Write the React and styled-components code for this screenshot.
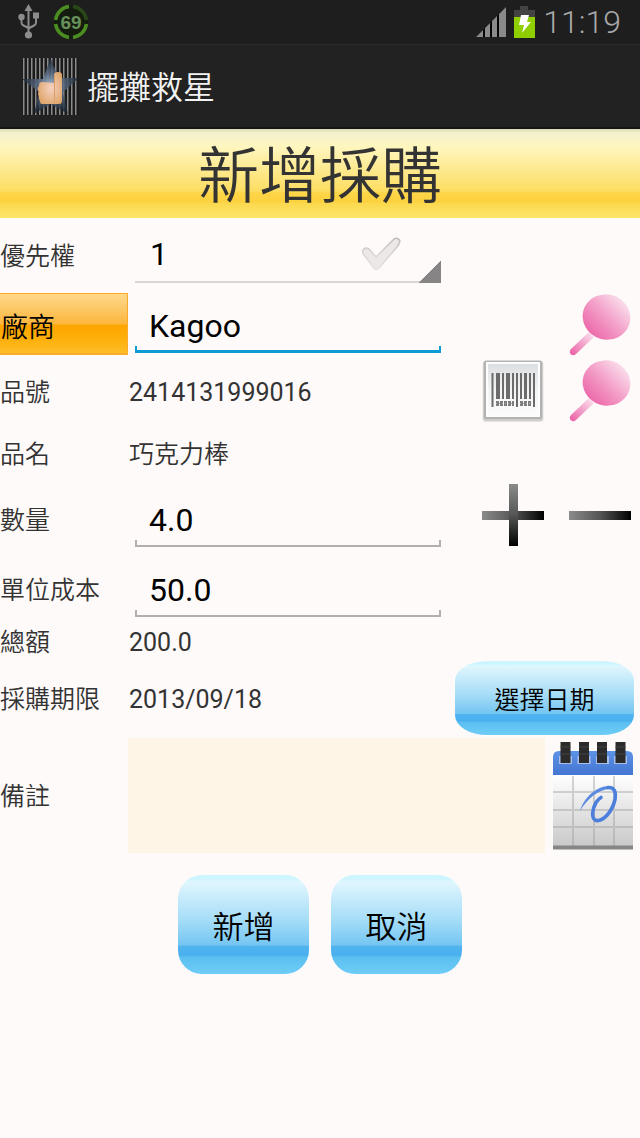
import React, { useState } from 'react'
import styled, { createGlobalStyle } from 'styled-components'

const App = () => {
  const [vendor, setVendor] = useState('Kagoo')
  const [quantity, setQuantity] = useState('4.0')
  const [cost, setCost] = useState('50.0')
  const [note, setNote] = useState('')

  const changeQuantity = (step) => {
    const next = Math.max(0, (parseFloat(quantity) || 0) + step)
    setQuantity(next.toFixed(1))
  }

  const total = (parseFloat(quantity) || 0) * (parseFloat(cost) || 0)

  return (
    <>
      <GlobalStyle />
      <StatusBar>
        <StatusGroup>
          <UsbIcon />
          <BatteryRing />
        </StatusGroup>
        <StatusGroup>
          <SignalIcon />
          <BatteryIcon />
          <Clock>11:19</Clock>
        </StatusGroup>
      </StatusBar>
      <AppBar>
        <AppLogo />
        <AppName>擺攤救星</AppName>
      </AppBar>
      <main>
        <PageTitle>新增採購</PageTitle>
        <form onSubmit={(e) => e.preventDefault()}>
          <Row $height={75}>
            <Label htmlFor="priority">優先權</Label>
            <Spinner>
              <Select id="priority" defaultValue="1">
                <option>1</option>
                <option>2</option>
                <option>3</option>
              </Select>
              <SpinnerMark>
                <CheckIcon />
              </SpinnerMark>
            </Spinner>
          </Row>
          <Row $height={66}>
            <VendorButton type="button">廠商</VendorButton>
            <Field
              $focused
              aria-label="廠商"
              value={vendor}
              onChange={(e) => setVendor(e.target.value)}
            />
            <Actions>
              <IconButton type="button" aria-label="搜尋廠商">
                <SearchIcon id="vendor" />
              </IconButton>
            </Actions>
          </Row>
          <Row $height={66}>
            <Caption>品號</Caption>
            <Value>2414131999016</Value>
            <Actions>
              <IconButton type="button" aria-label="掃描條碼">
                <BarcodeIcon />
              </IconButton>
              <IconButton type="button" aria-label="搜尋品號">
                <SearchIcon id="item" />
              </IconButton>
            </Actions>
          </Row>
          <Row $height={58}>
            <Caption>品名</Caption>
            <Value $light>巧克力棒</Value>
          </Row>
          <Row $height={73}>
            <Label htmlFor="quantity">數量</Label>
            <Field
              id="quantity"
              inputMode="decimal"
              value={quantity}
              onChange={(e) => setQuantity(e.target.value)}
            />
            <Actions>
              <IconButton
                type="button"
                aria-label="增加"
                onClick={() => changeQuantity(1)}
              >
                <PlusIcon />
              </IconButton>
              <IconButton
                type="button"
                aria-label="減少"
                onClick={() => changeQuantity(-1)}
              >
                <MinusIcon />
              </IconButton>
            </Actions>
          </Row>
          <Row $height={68}>
            <Label htmlFor="cost">單位成本</Label>
            <Field
              id="cost"
              inputMode="decimal"
              value={cost}
              onChange={(e) => setCost(e.target.value)}
            />
          </Row>
          <Row $height={36}>
            <Caption>總額</Caption>
            <Value>{total.toFixed(1)}</Value>
          </Row>
          <Row $height={78}>
            <Caption>採購期限</Caption>
            <Value>2013/09/18</Value>
            <DateButton type="button">選擇日期</DateButton>
          </Row>
          <NoteRow>
            <Label htmlFor="note">備註</Label>
            <Note
              id="note"
              value={note}
              onChange={(e) => setNote(e.target.value)}
            />
            <CalendarButton type="button" aria-label="行事曆">
              <CalendarIcon />
            </CalendarButton>
          </NoteRow>
          <Footer>
            <FooterButton type="submit">新增</FooterButton>
            <FooterButton type="button">取消</FooterButton>
          </Footer>
        </form>
      </main>
    </>
  )
}

export default App

const UsbIcon = () => (
  <svg width="22" height="36" viewBox="0 0 22 36" fill="#8c8c8c">
    <path d="M10.500 0l4 7h-8z" />
    <path
      d="M10.500 5v24M3.500 13v5.500q0 2 2 3l5 2.500M18 12v6.500q0 2-2 3l-5.500 3"
      fill="none"
      stroke="#8c8c8c"
      strokeWidth="2"
    />
    <circle cx="3.500" cy="13" r="3.200" />
    <path d="M15 8.500h6v6h-6z" />
    <circle cx="10.500" cy="31" r="3.600" />
  </svg>
)

const BatteryRing = () => (
  <svg width="36" height="36" viewBox="0 0 36 36">
    <circle cx="18" cy="18" r="17" fill="#141c10" />
    <g fill="none" strokeWidth="3.500">
      <path d="M20 2.600A15.500 15.500 0 0 1 33.400 16" stroke="#2a4718" />
      <path
        d="M33.400 20A15.500 15.500 0 0 1 20 33.400M16 33.400A15.500 15.500 0 0 1 2.600 20M2.600 16A15.500 15.500 0 0 1 16 2.600"
        stroke="#4c8d22"
      />
    </g>
    <text
      x="18"
      y="25"
      textAnchor="middle"
      fontFamily="Liberation Sans, sans-serif"
      fontWeight="700"
      fontSize="19"
      fill="#68905a"
    >
      69
    </text>
  </svg>
)

const SignalIcon = () => (
  <svg width="30" height="30" viewBox="0 0 30 30">
    <path d="M0 30L30 0v30z" fill="#050505" />
    <path
      d="M0 30l7-7v7zM9 21l5-5v14H9zM16 14l5-5v21h-5zM23 7l7-7v30h-7z"
      fill="#8a8a8a"
    />
  </svg>
)

const BatteryIcon = () => (
  <svg width="21" height="32" viewBox="0 0 21 32">
    <path d="M6 0h8v4h7v8H0V4h6z" fill="#434343" />
    <path d="M0 11h21v21H0z" fill="#8fce00" />
    <path d="M7 9h8l-2 7h4L8 27l2-8H5z" fill="#fff" />
  </svg>
)

const AppLogo = () => (
  <svg width="57" height="57" viewBox="0 0 57 57">
    <defs>
      <pattern id="bars" width="4" height="57" patternUnits="userSpaceOnUse">
        <path d="M0 0h4v57H0z" fill="#1b1b1b" />
        <path d="M1 0h1.500v57H1z" fill="#8b8b8b" />
      </pattern>
      <radialGradient id="star">
        <stop offset="0" stopColor="#a9bccf" />
        <stop offset="0.450" stopColor="#5b6c82" stopOpacity="0.900" />
        <stop offset="1" stopColor="#1b2534" stopOpacity="0.800" />
      </radialGradient>
      <radialGradient id="hand" cx="0.550" cy="0.500" r="0.600">
        <stop offset="0" stopColor="#f4d2c2" />
        <stop offset="1" stopColor="#dfa468" />
      </radialGradient>
    </defs>
    <path d="M0 0h57v57H0z" fill="url(#bars)" />
    <path
      d="M28.500 0l8 20H57L41 34l5 22-17.500-10L12 56l5-22L0 21h21z"
      fill="url(#star)"
    />
    <path
      d="M32 25V17q0-3 4-3t4 3v26q0 3-3 3H20q-2 0-2-3-1-1-1-3t-1-4q1-2 0-4t1-4q0-4 3-4z"
      fill="url(#hand)"
    />
    <path d="M32.500 17v28" stroke="#dc9d66" />
  </svg>
)

const CheckIcon = () => (
  <svg width="40" height="34" viewBox="0 0 40 34">
    <defs>
      <linearGradient id="check" x2="0" y2="1">
        <stop offset="0" stopColor="#bdbbba" />
        <stop offset="0.500" stopColor="#d8d5d4" />
        <stop offset="1" stopColor="#e4e1e0" />
      </linearGradient>
    </defs>
    <path
      d="M2 13q3-4 7 0l6 7L33 2q4-2 6 2-1 4-3 6L18 31q-3 3-5 0L3 18q-2-3-1-5z"
      fill="#ebe8e7"
      stroke="url(#check)"
      strokeWidth="1.500"
    />
  </svg>
)

const SearchIcon = ({ id }) => (
  <svg width="62" height="62" viewBox="0 0 62 62">
    <defs>
      <linearGradient id={`${id}-lens`} x1="0.250" y1="1" x2="0.800" y2="0">
        <stop offset="0" stopColor="#ec64a8" />
        <stop offset="0.500" stopColor="#f3a0c8" />
        <stop offset="1" stopColor="#fbe6f0" />
      </linearGradient>
      <linearGradient id={`${id}-grip`} x1="0" y1="1" x2="1" y2="0">
        <stop offset="0" stopColor="#ea5ba3" />
        <stop offset="1" stopColor="#fce9f2" />
      </linearGradient>
    </defs>
    <path
      d="M20 38l5 5L7 60q-3 2.500-5.500 0-1.500-3 0.500-5z"
      fill={`url(#${id}-grip)`}
    />
    <ellipse
      cx="37.500"
      cy="23"
      rx="24"
      ry="22.500"
      transform="rotate(18 37.500 23)"
      fill={`url(#${id}-lens)`}
    />
  </svg>
)

const BarcodeIcon = () => (
  <svg width="62" height="62" viewBox="0 0 62 62">
    <defs>
      <linearGradient id="paper" x2="0" y2="1">
        <stop offset="0" stopColor="#dcdfe1" />
        <stop offset="0.500" stopColor="#f3f4f4" />
        <stop offset="1" stopColor="#fbfbfb" />
      </linearGradient>
    </defs>
    <rect x="0.500" y="1" width="61" height="61" rx="3" fill="#e6e3e2" />
    <rect x="1" y="1" width="60" height="60" rx="3" fill="#cfcdcc" />
    <rect x="2" y="0.500" width="58" height="58.500" rx="2" fill="#b1b3b3" />
    <rect x="4" y="2" width="54" height="55" fill="#fdfdfd" />
    <rect x="6" y="4" width="50" height="51" fill="url(#paper)" />
    <path
      d="M9.500 13h2v34h-2zM14 13h4v26h-4zM20 13h2v26h-2zM24 13h4v26h-4zM30 13h2v26h-2zM34 13h2v34h-2zM38 13h2v26h-2zM42 13h3v26h-3zM47 13h2v26h-2zM51 13h2v34h-2z"
      fill="#6c6c6c"
    />
    <path
      d="M14 43.500h18M38 43.500h11"
      fill="none"
      stroke="#7c7c7c"
      strokeWidth="5"
      strokeDasharray="3 1"
    />
    <path d="M14 43.500h18M38 43.500h11" stroke="#aaa" strokeDasharray="1 2" />
  </svg>
)

const PlusIcon = () => (
  <svg width="62" height="62" viewBox="0 0 62 62">
    <defs>
      <linearGradient id="plus-x">
        <stop offset="0" stopColor="#8b8b8b" />
        <stop offset="0.500" stopColor="#555" />
        <stop offset="1" stopColor="#000" />
      </linearGradient>
      <linearGradient id="plus-y" x2="0" y2="1">
        <stop offset="0" stopColor="#8b8b8b" />
        <stop offset="0.500" stopColor="#555" />
        <stop offset="1" stopColor="#000" />
      </linearGradient>
    </defs>
    <path d="M0 27h62v9H0z" fill="url(#plus-x)" />
    <path d="M27 0h9v62h-9z" fill="url(#plus-y)" />
  </svg>
)

const MinusIcon = () => (
  <svg width="62" height="62" viewBox="0 0 62 62">
    <defs>
      <linearGradient id="minus">
        <stop offset="0" stopColor="#8b8b8b" />
        <stop offset="0.500" stopColor="#555" />
        <stop offset="1" stopColor="#000" />
      </linearGradient>
    </defs>
    <path d="M0 27h62v9H0z" fill="url(#minus)" />
  </svg>
)

const CalendarIcon = () => (
  <svg width="80" height="109" viewBox="0 0 80 109">
    <defs>
      <linearGradient id="sheet" x2="0" y2="1">
        <stop offset="0" stopColor="#fff" />
        <stop offset="1" stopColor="#c9c9c9" />
      </linearGradient>
      <linearGradient id="head" x2="0" y2="1">
        <stop offset="0" stopColor="#5d93e6" />
        <stop offset="1" stopColor="#4475d2" />
      </linearGradient>
    </defs>
    <path d="M0 34h80v71H0z" fill="url(#sheet)" />
    <path
      d="M20 35v70M41 35v70M61 35v70M0 51h80M0 69h80M0 86h80"
      stroke="#999"
      strokeOpacity="0.400"
      strokeWidth="2"
    />
    <path d="M0 104.500h80v4H0z" fill="#868686" />
    <path d="M0 34V16q0-6 6-6h68q6 0 6 6v18z" fill="url(#head)" />
    <path
      d="M6 15h13v8H6zM24.500 15h13v8h-13zM43 15h13v8H43zM61 15h13v8H61z"
      fill="#a9bde8"
    />
    <path
      d="M7.500 1h10v21h-10zM26 1h10v21H26zM44 1h10v21H44zM62.500 1h10v21h-10z"
      fill="#2b2b2b"
    />
    <path
      d="M7.500 6h10M26 6h10M44 6h10M62.500 6h10M7.500 13h10M26 13h10M44 13h10M62.500 13h10"
      stroke="#444"
    />
    <path
      d="M27 70C31 56 44 45 56 45L57 48C46 48 34 58 27 70z"
      fill="#5b8be0"
    />
    <path
      d="M55 46.500c7-0.500 8 5 7 12-3 13-12 22-19 21-5-2-4-11 0-18q3-4 5-5"
      fill="none"
      stroke="#4b7fdb"
      strokeWidth="3.600"
      strokeLinecap="round"
    />
  </svg>
)

const GlobalStyle = createGlobalStyle`
  * {
    box-sizing: border-box;
  }

  body {
    margin: 0;
    min-height: 100vh;
    background: #fefaf9;
    color: #333;
    font-family: Roboto, 'Noto Sans CJK TC', sans-serif;
    font-size: 25px;
  }

  button,
  input,
  select,
  textarea {
    margin: 0;
    padding: 0;
    border: 0;
    border-radius: 0;
    outline: 0;
    background: none;
    color: #000;
    font: inherit;
  }

  svg {
    display: block;
    flex: none;
  }
`

const StatusBar = styled.div`
  display: flex;
  justify-content: space-between;
  align-items: center;
  height: 44px;
  padding: 0 19px 0 18px;
  background: #1e1e1e;
`

const StatusGroup = styled.div`
  display: flex;
  align-items: center;
  gap: 8px;

  &:first-child {
    gap: 13px;
  }
`

const Clock = styled.time`
  color: #a8a8a8;
  font-size: 32px;
  font-weight: 300;
  line-height: 44px;
`

const AppBar = styled.header`
  display: flex;
  align-items: center;
  gap: 8px;
  height: 85px;
  padding: 0 22px;
  background: #222;
  border-top: 1px solid #2a2a2a;
  border-bottom: 2px solid #161616;
`

const AppName = styled.span`
  padding-top: 4px;
  color: #f3f3f3;
  font-size: 32px;
  font-weight: 350;
  line-height: 40px;
`

const PageTitle = styled.h1`
  margin: 0;
  height: 89px;
  background: linear-gradient(
    #d9d9ae 0,
    #f3f1cf 4%,
    #fff6be 20%,
    #fde88a 48%,
    #fddd63 69%,
    #fdd548 72%,
    #fdd13e 82%,
    #fbd94f 84%,
    #fde568 100%
  );
  font-size: 61px;
  font-weight: 350;
  line-height: 96px;
  text-align: center;
`

const Row = styled.div`
  display: grid;
  grid-template-columns: 2fr 5fr 3fr;
  align-items: center;
  min-height: ${({ $height }) => $height}px;
`

const Label = styled.label`
  padding-top: 2px;
  font-weight: 350;
  line-height: 32px;
  white-space: nowrap;
`

const Caption = styled.span`
  padding-top: 2px;
  font-weight: 350;
  line-height: 32px;
  white-space: nowrap;
`

const Value = styled.span`
  padding-top: 2px;
  padding-left: 1px;
  font-weight: ${({ $light }) => ($light ? 350 : 400)};
  line-height: 32px;
`

const Spinner = styled.div`
  position: relative;
  height: 55px;
  margin: 0 7px;
`

const Select = styled.select`
  width: 100%;
  height: 100%;
  padding: 0 0 3px 15px;
  appearance: none;
  background:
    linear-gradient(135deg, transparent 50%, #868484 50%) right bottom / 22px
      22px no-repeat,
    linear-gradient(#d8d5d4, #d8d5d4) left bottom / 100% 2px no-repeat;
  font-size: 32px;
`

const SpinnerMark = styled.span`
  position: absolute;
  top: 9px;
  right: 40px;
  pointer-events: none;
`

const Field = styled.input`
  --line: ${({ $focused }) => ($focused ? '#0d9bd1' : '#b0aeae')};
  --thick: ${({ $focused }) => ($focused ? '3px' : '2px')};
  height: 54px;
  min-width: 0;
  margin: 0 7px;
  padding-left: 14px;
  background:
    linear-gradient(var(--line), var(--line)) left bottom / 100% var(--thick)
      no-repeat,
    linear-gradient(var(--line), var(--line)) left bottom / 2px 7px no-repeat,
    linear-gradient(var(--line), var(--line)) right bottom / 2px 7px no-repeat;
  font-size: 32px;
`

const VendorButton = styled.button`
  align-self: start;
  height: 62px;
  padding-top: 3px;
  padding-left: 1px;
  background: linear-gradient(
    #ffd888 0,
    #fdc866 25%,
    #fdb63c 51%,
    #fea500 53%,
    #feae08 75%,
    #fdbe28 100%
  );
  border: solid #fbaa2a;
  border-width: 1px 1px 2px 0;
  font-size: 27px;
  font-weight: 350;
  text-align: left;
`

const Actions = styled.div`
  display: flex;
  align-self: start;
  justify-content: flex-end;
  gap: 25px;
  padding: 1px 9px 0 0;
`

const IconButton = styled.button`
  cursor: pointer;
`

const CalendarButton = styled(IconButton)`
  margin: 0 7px 0 8px;
`

const BlueButton = styled.button`
  background: linear-gradient(
    #cdf5ff 0,
    #cdf5ff 4%,
    #e0f6fe 7%,
    #a6ddf7 45%,
    #74c5f2 71%,
    #50b3ef 72%,
    #49b0ee 81%,
    #5bbff1 83%,
    #6fcdf6 100%
  );
  font-weight: 350;
  cursor: pointer;
`

const DateButton = styled(BlueButton)`
  align-self: start;
  height: 74px;
  margin: 1px 6px 0 7px;
  border-radius: 32px / 20px;
  font-size: 25px;
`

const NoteRow = styled.div`
  display: grid;
  grid-template-columns: 20% 1fr auto;
  align-items: center;
`

const Note = styled.textarea`
  height: 115px;
  min-width: 0;
  padding: 8px;
  background: #fff5e6;
  resize: none;
`

const Footer = styled.div`
  display: flex;
  justify-content: center;
  gap: 22px;
  padding: 22px 0;
`

const FooterButton = styled(BlueButton)`
  width: 131px;
  height: 99px;
  border-radius: 24px;
  font-size: 31px;
`
